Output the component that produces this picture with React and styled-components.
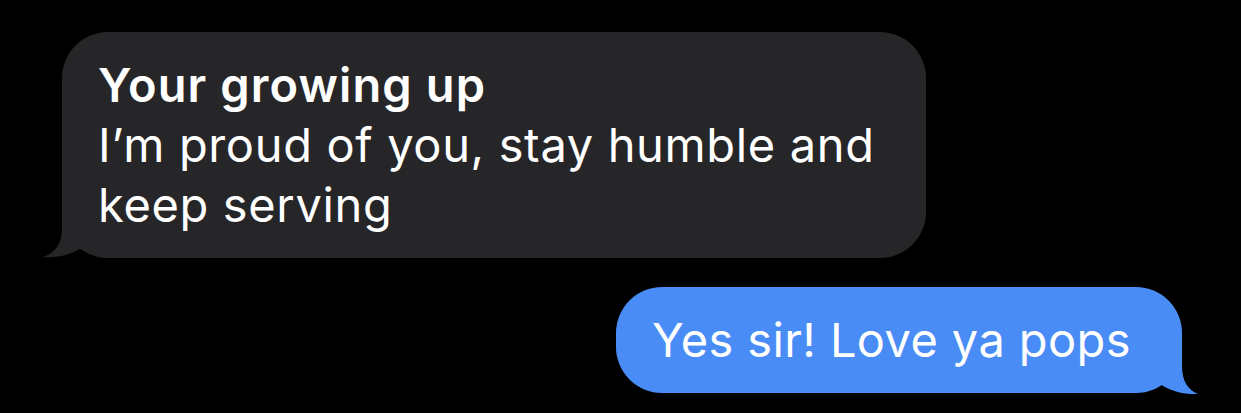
import React from "react";
import styled, { createGlobalStyle } from "styled-components";

const GlobalStyle = createGlobalStyle`
  html, body {
    margin: 0;
    padding: 0;
    background: #000;
  }
  body {
    font-family: Inter, "Noto Sans", "Liberation Sans", sans-serif;
    -webkit-font-smoothing: antialiased;
  }
`;

const StyledThread = styled.div`
  width: 1241px;
  height: 413px;
  overflow: hidden;
  box-sizing: border-box;
  display: flex;
  flex-direction: column;
  gap: 29px;
  padding: 32px 59px 0 62px;
  background: #000;
`;

const StyledRow = styled.div`
  display: flex;
  justify-content: ${(p) => (p.$mine ? "flex-end" : "flex-start")};
`;

const StyledBubble = styled.div`
  position: relative;
  padding: 23px 51px 23px 36px;
  border-radius: 46px;
  background: ${(p) => (p.$mine ? "#4a8cf6" : "#262629")};
  color: #fff;
  font-size: 47px;
  line-height: 60px;
  letter-spacing: ${(p) => (p.$mine ? "0.4px" : "0.65px")};
  white-space: nowrap;
`;

const StyledSender = styled.div`
  font-weight: 600;
  letter-spacing: 1.1px;
`;

const StyledTail = styled.svg`
  position: absolute;
  bottom: ${(p) => (p.$mine ? "-1px" : "0")};
  ${(p) => (p.$mine ? "right: -16px;" : "left: -19px;")}
  width: 40px;
  height: 60px;
`;

const Tail = ({ mine, color }) => (
  <StyledTail $mine={mine} viewBox="0 0 40 60">
    {mine ? (
      <path
        d="M24 0 L24 32 C24 47 30 56 40 60 C27 61 12 57 2 50 L0 10 Z"
        fill={color}
      />
    ) : (
      <path
        d="M19 0 L19 30 C19 46 12 55 0 59 C13 60 28 57 38 50 L40 10 Z"
        fill={color}
      />
    )}
  </StyledTail>
);

export default function App() {
  return (
    <>
      <GlobalStyle />
      <StyledThread>
        <StyledRow>
          <StyledBubble>
            <StyledSender>Your growing up</StyledSender>
            I’m proud of you, stay humble and
            <br />
            keep serving
            <Tail color="#262629" />
          </StyledBubble>
        </StyledRow>
        <StyledRow $mine>
          <StyledBubble $mine>
            Yes sir! Love ya pops
            <Tail mine color="#4a8cf6" />
          </StyledBubble>
        </StyledRow>
      </StyledThread>
    </>
  );
}
